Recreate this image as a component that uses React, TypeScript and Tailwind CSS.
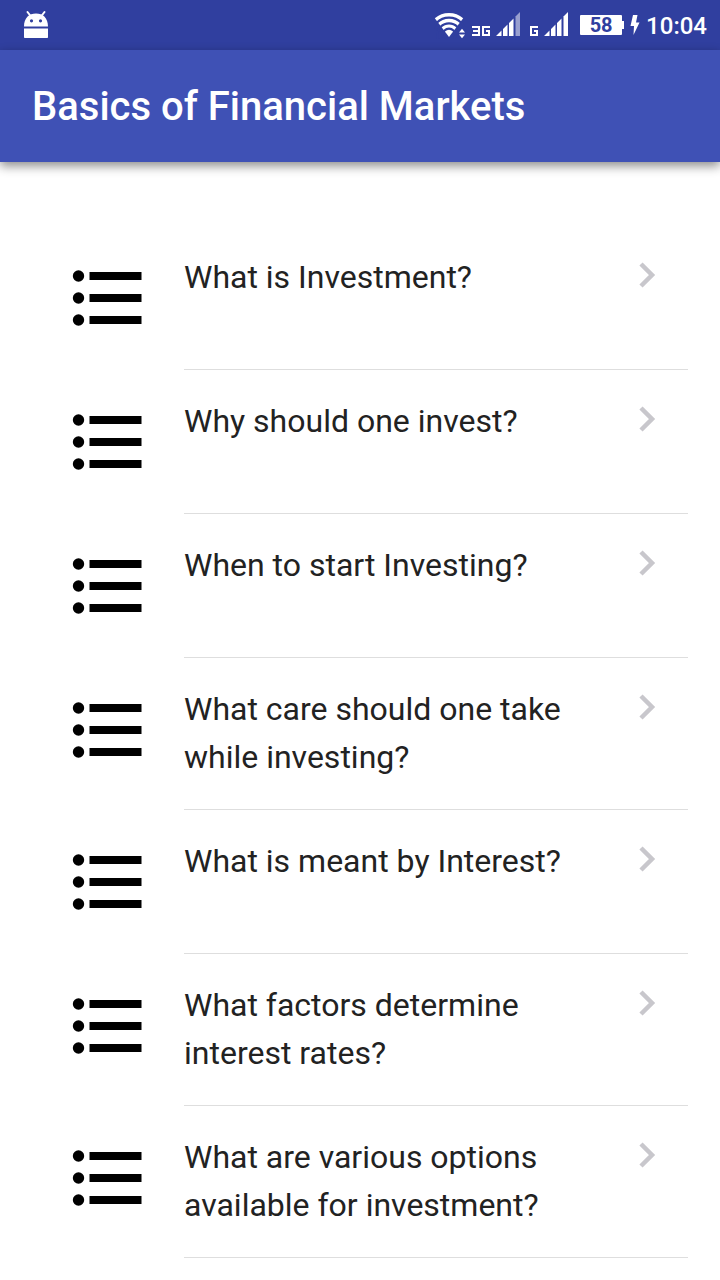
const questions = [
  "What is Investment?",
  "Why should one invest?",
  "When to start Investing?",
  "What care should one take while investing?",
  "What is meant by Interest?",
  "What factors determine interest rates?",
  "What are various options available for investment?",
];

function AndroidIcon() {
  return (
    <svg width="26" height="30" viewBox="0 0 26 30" fill="#fff" aria-hidden="true">
      <path d="M4.500 2 8 6.500M21.500 2 18 6.500" stroke="#fff" strokeWidth="2" strokeLinecap="round" />
      <path
        fillRule="evenodd"
        d="M1 16.500C1 8 6 3.500 13 3.500s12 4.500 12 13ZM8.500 9.200a1.600 1.600 0 1 0 0 3.200 1.600 1.600 0 0 0 0-3.200Zm9 0a1.600 1.600 0 1 0 0 3.200 1.600 1.600 0 0 0 0-3.200Z"
      />
      <path d="M1 18.500H25V27.200a.8.8 0 0 1-.8.8H1.800a.8.8 0 0 1-.8-.8Z" />
    </svg>
  );
}

function WifiIcon() {
  return (
    <svg width="32" height="28" viewBox="0 0 32 28" fill="none" aria-hidden="true">
      <path d="M15 26 .8 7.200A22 22 0 0 1 29.200 7.200Z" fill="#fff" />
      <g stroke="#303f9f" strokeWidth="2.200">
        <circle cx="15" cy="24" r="17.300" />
        <circle cx="15" cy="24" r="11.700" />
        <circle cx="15" cy="24" r="6.300" />
      </g>
      <path d="M23.500 16H32V28H23.500Z" fill="#303f9f" />
      <path d="M25 21.500 28 17.800 31 21.500ZM25 23.500H31L28 27.200Z" fill="#fff" />
    </svg>
  );
}

function SignalIcon({ dimmed = false }: { dimmed?: boolean }) {
  return (
    <svg width="24" height="24" viewBox="0 0 24 24" fill="#fff" aria-hidden="true">
      <path d="M0 24 5.500 18.500V24ZM7 17 11.500 12.500V24H7ZM13 11 17.500 6.500V24H13Z" />
      <path d="M19.500 4.500 24 0V24H19.500Z" fillOpacity={dimmed ? 0.5 : 1} />
    </svg>
  );
}

function ThreeMark() {
  return (
    <svg width="8" height="10" viewBox="0 0 8 10" fill="none" stroke="#fff" strokeWidth="2" aria-hidden="true">
      <path d="M0 1H7V9H0M1 5H7" />
    </svg>
  );
}

function GMark() {
  return (
    <svg width="8" height="10" viewBox="0 0 8 10" fill="none" stroke="#fff" strokeWidth="2" aria-hidden="true">
      <path d="M8 1H1V9H7V5H4" />
    </svg>
  );
}

function BoltIcon() {
  return (
    <svg width="10" height="20" viewBox="0 0 10 20" fill="#fff" aria-hidden="true">
      <path d="M3 0H7.500L6 7.500H9.500L3.500 20 4 11H.500Z" />
    </svg>
  );
}

function ListIcon() {
  return (
    <svg className="shrink-0" width="72" height="72" viewBox="0 0 72 72" aria-hidden="true">
      {[14, 36, 58].map((y) => (
        <g key={y}>
          <circle cx="6.500" cy={y} r="5.700" />
          <rect x="17.500" y={y - 4} width="52" height="8" />
        </g>
      ))}
    </svg>
  );
}

function Chevron() {
  return (
    <svg className="shrink-0" width="18" height="28" viewBox="0 0 18 28" fill="none" aria-hidden="true">
      <path d="M3 3 14 14 3 25" stroke="#c8c7cc" strokeWidth="4.500" />
    </svg>
  );
}

export default function App() {
  return (
    <div className="min-h-screen bg-white font-['Roboto',sans-serif] text-[#222]">
      <div className="flex h-[50px] items-center justify-between bg-[#303f9f] pr-[13px] pl-[23px] text-white">
        <AndroidIcon />
        <div className="flex items-center">
          <WifiIcon />
          <div className="ml-1.5 flex items-end pb-0.5">
            <span className="flex gap-0.5">
              <ThreeMark />
              <GMark />
            </span>
            <span className="ml-1.5">
              <SignalIcon dimmed />
            </span>
          </div>
          <div className="ml-2.5 flex items-end gap-1.5 pb-0.5">
            <GMark />
            <SignalIcon />
          </div>
          <div className="ml-3 flex items-center">
            <span className="flex h-5 w-[42px] items-center justify-center rounded-[1px] bg-white text-xl font-bold leading-5 text-[#303f9f]">
              58
            </span>
            <span className="h-2 w-0.5 bg-white" />
          </div>
          <span className="ml-1.5">
            <BoltIcon />
          </span>
          <time className="ml-1.5 pt-0.5 text-2xl font-medium">10:04</time>
        </div>
      </div>
      <header className="flex h-28 items-center bg-[#3f51b5] px-8 pt-0.5 shadow-[0_4px_10px_rgba(0,0,0,0.45)]">
        <h1 className="text-[40px] font-medium text-white">Basics of Financial Markets</h1>
      </header>
      <main className="pt-16 pr-8 pl-[72px]">
        <ul>
          {questions.map((question) => (
            <li key={question}>
              <a href="#" className="flex items-start gap-10">
                <span className="pt-9">
                  <ListIcon />
                </span>
                <span className="flex min-h-36 flex-1 items-start border-b border-[#dedede] pt-[27px] pr-8 pb-7">
                  <span className="flex-1 pr-5 text-[32px] leading-[48px]">{question}</span>
                  <span className="pt-2">
                    <Chevron />
                  </span>
                </span>
              </a>
            </li>
          ))}
        </ul>
      </main>
    </div>
  );
}
